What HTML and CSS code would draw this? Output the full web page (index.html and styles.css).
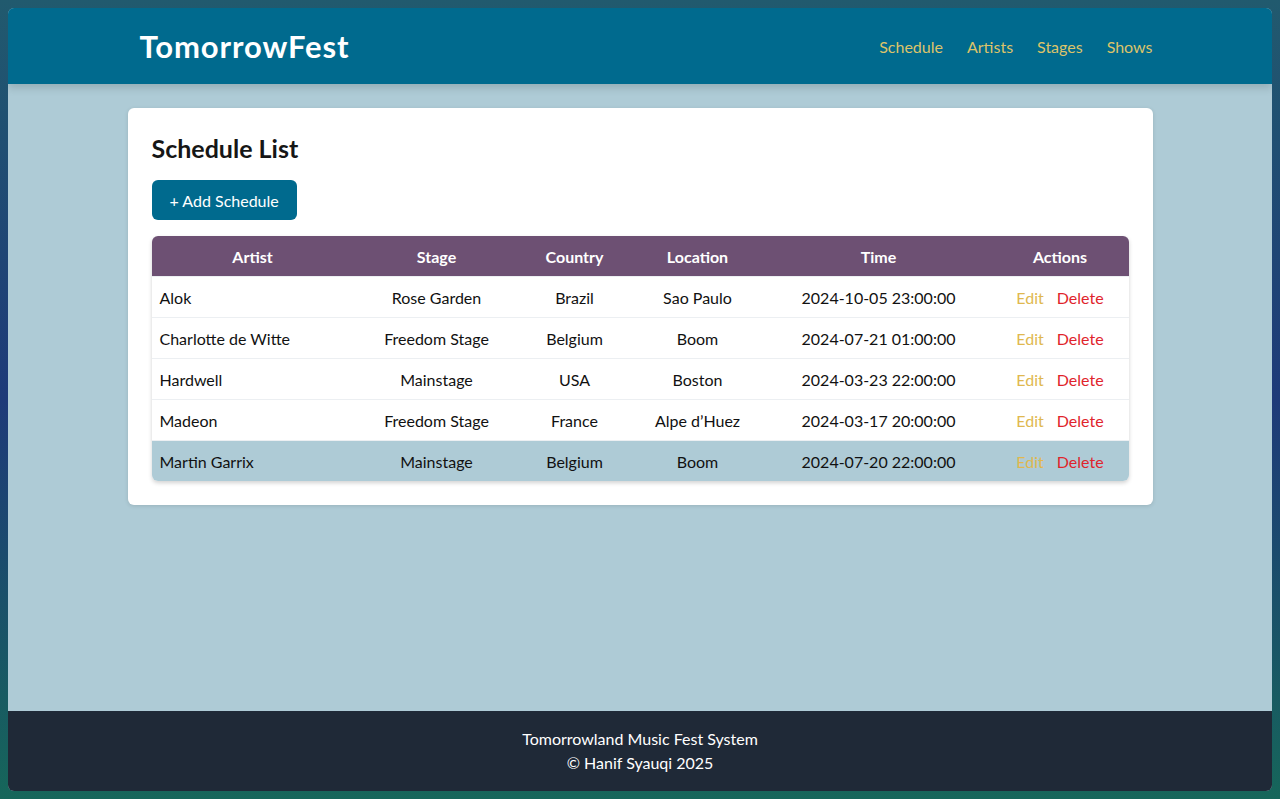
FILE: index.html
```html
<!DOCTYPE html>
<html lang="en">
<head>
<meta charset="utf-8">
<title>TomorrowFest</title>
<link rel="stylesheet" href="styles.css">
</head>
<body>
<div class="app">
  <header class="topbar">
    <div class="topbar-inner">
      <div class="brand">TomorrowFest</div>
      <nav class="nav">
        <a href="#">Schedule</a>
        <a href="#">Artists</a>
        <a href="#">Stages</a>
        <a href="#">Shows</a>
      </nav>
    </div>
  </header>
  <main class="main">
    <section class="card">
      <h1 class="title">Schedule List</h1>
      <button class="btn-add">+ Add Schedule</button>
      <div class="table-wrap">
        <table class="table">
          <colgroup>
            <col class="c-artist"><col class="c-stage"><col class="c-country"><col class="c-location"><col class="c-time"><col class="c-actions">
          </colgroup>
          <thead>
            <tr><th>Artist</th><th>Stage</th><th>Country</th><th>Location</th><th>Time</th><th>Actions</th></tr>
          </thead>
          <tbody>
            <tr><td class="left">Alok</td><td>Rose Garden</td><td>Brazil</td><td>Sao Paulo</td><td>2024-10-05 23:00:00</td><td><span class="edit">Edit</span><span class="del">Delete</span></td></tr>
            <tr><td class="left">Charlotte de Witte</td><td>Freedom Stage</td><td>Belgium</td><td>Boom</td><td>2024-07-21 01:00:00</td><td><span class="edit">Edit</span><span class="del">Delete</span></td></tr>
            <tr><td class="left">Hardwell</td><td>Mainstage</td><td>USA</td><td>Boston</td><td>2024-03-23 22:00:00</td><td><span class="edit">Edit</span><span class="del">Delete</span></td></tr>
            <tr><td class="left">Madeon</td><td>Freedom Stage</td><td>France</td><td>Alpe d’Huez</td><td>2024-03-17 20:00:00</td><td><span class="edit">Edit</span><span class="del">Delete</span></td></tr>
            <tr class="hover"><td class="left">Martin Garrix</td><td>Mainstage</td><td>Belgium</td><td>Boom</td><td>2024-07-20 22:00:00</td><td><span class="edit">Edit</span><span class="del">Delete</span></td></tr>
          </tbody>
        </table>
      </div>
    </section>
  </main>
  <footer class="footer">
    <p>Tomorrowland Music Fest System</p>
    <p>© Hanif Syauqi 2025</p>
  </footer>
</div>
</body>
</html>
```

FILE: styles.css
```css
html {
  height: 100%;
  background: linear-gradient(180deg, #215a6e 0%, #1e3a79 50%, #16665a 100%);
}
body {
  margin: 8px;
  height: calc(100% - 16px);
  font-family: "Lato", "Open Sans", sans-serif;
  font-size: 16px;
  color: #111;
}
.app {
  height: 100%;
  display: flex;
  flex-direction: column;
  background: #aecbd6;
  border-radius: 6px;
  overflow: hidden;
}
.topbar {
  background: #006a8e;
  height: 76px;
  flex: none;
  box-shadow: 0 4px 8px rgba(0,0,0,0.15);
  position: relative;
  z-index: 1;
}
.topbar-inner {
  width: 1025px;
  margin: 0 auto;
  height: 100%;
  display: flex;
  align-items: center;
  justify-content: space-between;
  padding-left: 12px;
  box-sizing: border-box;
}
.brand {
  color: #fff;
  font-weight: 700;
  font-size: 31px;
  letter-spacing: 0.9px;
}
.nav {
  display: flex;
  gap: 24px;
}
.nav a {
  color: #dcc36a;
  text-decoration: none;
  font-size: 16px;
}
.main {
  flex: 1;
  padding-top: 24px;
}
.card {
  width: 1025px;
  box-sizing: border-box;
  margin: 0 auto;
  background: #fff;
  border-radius: 6px;
  padding: 24px;
  box-shadow: 0 1px 4px rgba(0,0,0,0.12);
}
.title {
  margin: 0 0 16px;
  font-size: 25px;
  font-weight: 700;
  line-height: 32px;
  color: #161616;
}
.btn-add {
  display: block;
  height: 40px;
  padding: 0 18px;
  background: #006a8e;
  color: #fff;
  border: 0;
  border-radius: 6px;
  font-family: inherit;
  font-size: 16px;
  margin-bottom: 16px;
}
.table-wrap {
  border-radius: 6px;
  overflow: hidden;
  box-shadow: 0 2px 4px rgba(0,0,0,0.18);
}
.table {
  width: 100%;
  border-collapse: collapse;
  table-layout: fixed;
}
.c-artist { width: 202px; }
.c-stage { width: 166px; }
.c-country { width: 110px; }
.c-location { width: 136px; }
.c-time { width: 226px; }
.c-actions { width: auto; }
.table th {
  background: #6d5073;
  color: #fff;
  font-weight: 700;
  height: 40px;
  padding: 0 8px;
  text-align: center;
}
.table td {
  height: 40px;
  padding: 0 8px;
  text-align: center;
  border-top: 1px solid #eceff2;
  color: #111;
}
.table td.left { text-align: left; }
.table tr.hover td { background: #aecbd6; }
.edit { color: #e0b84f; margin-right: 13px; }
.del { color: #e0242c; }
.footer {
  flex: none;
  background: #1f2937;
  color: #fff;
  text-align: center;
  padding: 16px 0;
}
.footer p {
  margin: 0;
  line-height: 24px;
}
```
